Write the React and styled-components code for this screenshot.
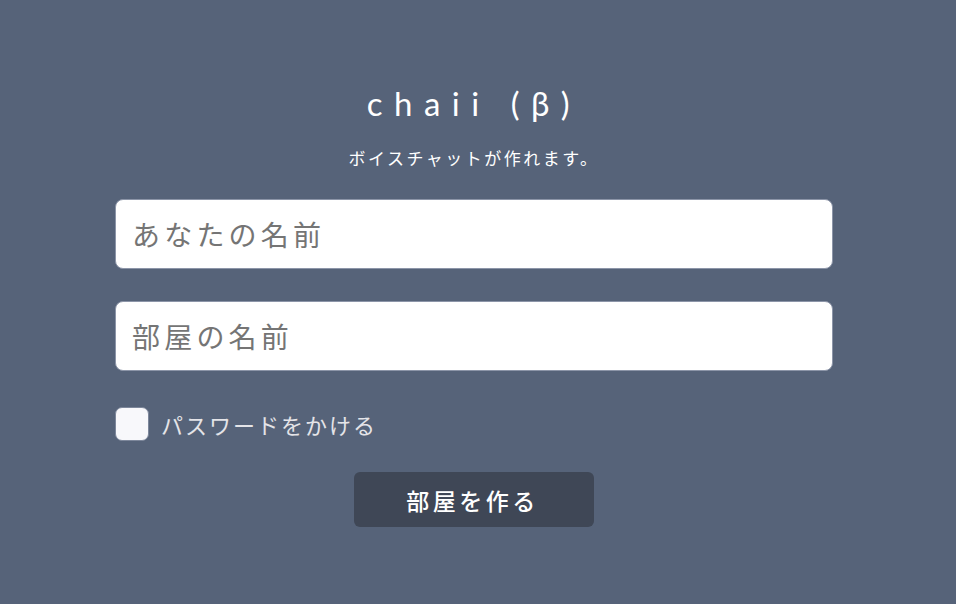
import * as React from "react";
import styled, { createGlobalStyle } from "styled-components";

const GlobalStyle = createGlobalStyle`
html, body {
    margin: 0;
    padding: 0;
    background-color: #566379;
    font-family: Lato, "Noto Sans CJK JP", sans-serif;
}
`

const Page = styled.div`
min-height: 604px;
box-sizing: border-box;
padding: 83px 123px 0 115px;
display: flex;
flex-direction: column;
align-items: center;
`

const Title = styled.h1`
margin: 0;
color: #ffffff;
font-family: Lato, sans-serif;
font-weight: 400;
font-size: 33px;
letter-spacing: 11.5px;
line-height: 40px;
`

const SubTitle = styled.p`
margin: 25px 0 0;
color: #ffffff;
font-size: 17px;
font-weight: 400;
letter-spacing: 2.5px;
line-height: 20px;
font-family: "Noto Sans CJK JP", sans-serif;
`

const Form = styled.form`
width: 100%;
margin-top: 31px;
display: flex;
flex-direction: column;
gap: 32px;
`

const TextInput = styled.input`
box-sizing: border-box;
width: 100%;
height: 70px;
padding: 0 16px;
border: 1.5px solid #8c95a8;
border-radius: 8px;
background-color: #ffffff;
font-family: "Noto Sans CJK JP", sans-serif;
font-size: 28px;
letter-spacing: 4.2px;
color: #333;
outline: none;

&::placeholder {
    color: #757575;
}
`

const CheckRow = styled.label`
display: flex;
align-items: center;
gap: 12px;
margin-top: 4px;
color: #e4e4e8;
font-size: 22px;
letter-spacing: 2px;
font-family: "Noto Sans CJK JP", sans-serif;
`

const CheckBox = styled.span`
width: 34px;
height: 34px;
box-sizing: border-box;
border-radius: 7px;
background-color: #f8f8fb;
border: 1.5px solid #7d879b;
`

const SubmitButton = styled.button`
align-self: center;
width: 240px;
height: 55px;
margin-top: -1px;
padding-left: 3px;
border: none;
border-radius: 6px;
background-color: #3f4756;
color: #ffffff;
font-family: "Noto Sans CJK JP", sans-serif;
font-size: 23px;
letter-spacing: 3.5px;
font-weight: 500;
`

export default function App() {
    return (
        <>
            <GlobalStyle />
            <Page>
                <Title>chaii (β)</Title>
                <SubTitle>ボイスチャットが作れます。</SubTitle>
                <Form onSubmit={(e) => e.preventDefault()}>
                    <TextInput type="text" placeholder="あなたの名前" />
                    <TextInput type="text" placeholder="部屋の名前" />
                    <CheckRow>
                        <CheckBox />
                        パスワードをかける
                    </CheckRow>
                    <SubmitButton type="submit">部屋を作る</SubmitButton>
                </Form>
            </Page>
        </>
    );
}
